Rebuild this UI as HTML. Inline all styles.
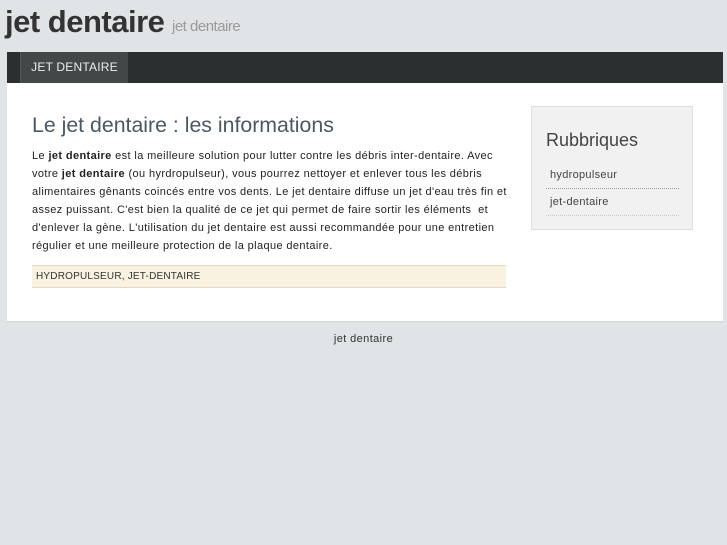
<!DOCTYPE html>
<html><head><meta charset="utf-8"><style>
*{margin:0;padding:0;box-sizing:border-box}
body{width:727px;height:545px;background:#e1e4e7;font-family:"Liberation Sans",sans-serif;color:#222;position:relative;overflow:hidden}
.logo{position:absolute;left:5px;top:4px;font-size:31px;font-weight:bold;color:#333;letter-spacing:-0.5px}
.sub{position:absolute;left:172px;top:18px;font-size:15px;color:#999;letter-spacing:-0.5px}
.nav{position:absolute;left:7px;top:52px;width:716px;height:31px;background:#2b2f30}
.tab{position:absolute;left:13px;top:0;width:108px;height:31px;background:#434748;border-left:1px solid #555;color:#eee;font-size:12px;line-height:31px;text-align:center;letter-spacing:0.2px}
.main{position:absolute;left:7px;top:83px;width:716px;height:239px;background:#fff;border-bottom:1px solid #d3d6d9}
h1{position:absolute;left:25px;top:30px;font-size:21.3px;font-weight:normal;color:#4a5865}
.p{position:absolute;left:25px;top:64px;width:482px;font-size:11px;line-height:18px;color:#222;letter-spacing:0.38px}
.tags{position:absolute;left:25px;top:182px;width:474px;height:23px;background:#faf2e1;border-top:1px solid #e3d9c4;border-bottom:1px solid #e3d9c4;font-size:10px;line-height:21px;padding-left:4px;color:#333;letter-spacing:0.2px}
.side{position:absolute;left:524px;top:23px;width:162px;height:124px;background:#f1f1f1;border:1px solid #e0e0e0}
.side h2{position:absolute;left:14px;top:23px;font-size:18px;font-weight:normal;color:#444}
.l{position:absolute;left:14px;width:133px;font-size:11px;color:#444;padding-left:4px;height:27px;line-height:27px;border-bottom:1px dotted #999;letter-spacing:0.3px}
.foot{position:absolute;left:0;width:727px;top:333px;text-align:center;font-size:11px;color:#333;letter-spacing:0.4px}
</style></head><body>
<div class="logo">jet dentaire</div><div class="sub">jet dentaire</div>
<div class="nav"><div class="tab">JET DENTAIRE</div></div>
<div class="main">
<h1>Le jet dentaire : les informations</h1>
<div class="p">Le <b>jet dentaire</b> est la meilleure solution pour lutter contre les débris inter-dentaire. Avec votre <b>jet dentaire</b> (ou hyrdropulseur), vous pourrez nettoyer et enlever tous les débris alimentaires gênants coincés entre vos dents. Le jet dentaire diffuse un jet d'eau très fin et assez puissant. C'est bien la qualité de ce jet qui permet de faire sortir les éléments &nbsp;et d'enlever la gène. L'utilisation du jet dentaire est aussi recommandée pour une entretien régulier et une meilleure protection de la plaque dentaire.</div>
<div class="tags">HYDROPULSEUR, JET-DENTAIRE</div>
<div class="side"><h2>Rubbriques</h2>
<div class="l" style="top:55px">hydropulseur</div>
<div class="l" style="top:82px;border-bottom-color:#ccc">jet-dentaire</div></div>
</div>
<div class="foot">jet dentaire</div>
</body></html>
